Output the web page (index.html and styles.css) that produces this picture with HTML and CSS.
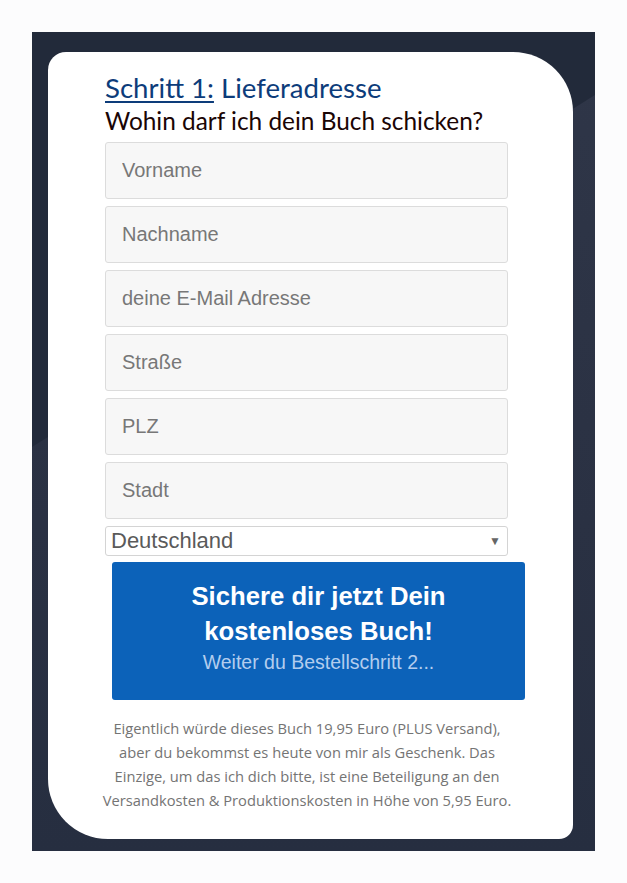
FILE: index.html
```html
<!DOCTYPE html>
<html lang="de">
<head>
  <meta charset="UTF-8">
  <meta name="viewport" content="width=device-width, initial-scale=1.0">
  <title>Lieferadresse</title>
  <link rel="stylesheet" href="styles.css">
</head>
<body>

  <!-- Hintergrund -->
  <div class="fondo">

    <!-- Karte mit dem Formular -->
    <div class="tarjeta">
      <h2 class="titulo"><span class="paso">Schritt 1:</span> Lieferadresse</h2>
      <p class="pregunta">Wohin darf ich dein Buch schicken?</p>

      <form class="formulario" onsubmit="return false">
        <input class="campo" type="text" placeholder="Vorname">
        <input class="campo" type="text" placeholder="Nachname">
        <input class="campo" type="email" placeholder="deine E-Mail Adresse">
        <input class="campo" type="text" placeholder="Straße">
        <input class="campo" type="text" placeholder="PLZ">
        <input class="campo" type="text" placeholder="Stadt">

        <div class="selector">
          <span>Deutschland</span>
          <span class="flecha">&#9660;</span>
        </div>

        <button class="boton" type="submit">
          <span class="boton-titulo">Sichere dir jetzt Dein<br>kostenloses Buch!</span>
          <span class="boton-sub">Weiter du Bestellschritt 2...</span>
        </button>
      </form>

      <p class="nota">
        Eigentlich würde dieses Buch 19,95 Euro (PLUS Versand),<br>
        aber du bekommst es heute von mir als Geschenk. Das<br>
        Einzige, um das ich dich bitte, ist eine Beteiligung an den<br>
        Versandkosten &amp; Produktionskosten in Höhe von 5,95 Euro.
      </p>
    </div>

  </div>

</body>
</html>
```

FILE: styles.css
```css
/* Estilos generales */
body, html {
  margin: 0;
  padding: 0;
  background-color: #fcfcfd;
  font-family: "Liberation Sans", Arial, sans-serif;
}

/* Fondo oscuro con la franja diagonal */
.fondo {
  position: relative;
  margin: 32px 0 0 32px;
  width: 563px;
  height: 819px;
  padding: 20px 0 0 16px;
  box-sizing: border-box;
  background: linear-gradient(180deg, #222a3a 0%, #222a3b 60%, #252d3f 100%);
}

.fondo::before {
  content: "";
  position: absolute;
  inset: 0;
  background: linear-gradient(180deg, #2f3648 0%, #2a3143 60%, #262e40 100%);
  clip-path: polygon(0 415px, 100% 63px, 100% 100%, 0 100%);
}

/* Tarjeta blanca */
.tarjeta {
  position: relative; /* encima de la franja */
  width: 525px;
  height: 787px;
  box-sizing: border-box;
  padding: 20px 0 0 57px;
  background-color: #fff;
  border-radius: 18px 60px 14px 60px;
}

.titulo {
  margin: 0;
  font-family: Lato, sans-serif;
  font-weight: 400;
  font-size: 27.6px;
  line-height: 32px;
  color: #0d3c7a;
}

.paso {
  text-decoration: underline;
  text-underline-offset: 3px;
  text-decoration-thickness: 2px;
}

.pregunta {
  margin: 2px 0 6px;
  font-family: Lato, sans-serif;
  font-size: 24.4px;
  line-height: 30px;
  color: #1a0505;
}

/* Formulario */
.formulario {
  display: flex;
  flex-direction: column;
  align-items: flex-start;
}

.campo {
  width: 403px;
  height: 57px;
  box-sizing: border-box;
  margin: 0 0 7px;
  padding: 0 16px;
  border: 1px solid #dcdcdc;
  border-radius: 3px;
  background-color: #f7f7f7;
  font-family: "Liberation Sans", Arial, sans-serif;
  font-size: 20px;
  color: #555;
}

.campo::placeholder {
  color: #777;
}

.selector {
  display: flex;
  justify-content: space-between;
  align-items: center;
  width: 403px;
  height: 30px;
  box-sizing: border-box;
  margin: 0 0 6px;
  padding: 0 6px 0 5px;
  border: 1px solid #d4d4d4;
  border-radius: 3px;
  background-color: #fff;
  font-size: 22px;
  color: #5a5a5a;
}

.flecha {
  font-size: 12px;
  color: #666;
}

.boton {
  display: flex;
  flex-direction: column;
  align-items: center;
  width: 413px;
  height: 138px;
  margin-left: 7px;
  padding: 17px 0 0;
  border: none;
  border-radius: 3px;
  background-color: #0c62b9;
  font-family: "Liberation Sans", Arial, sans-serif;
  cursor: pointer;
}

.boton-titulo {
  font-size: 25.7px;
  font-weight: bold;
  line-height: 35px;
  color: #fff;
}

.boton-sub {
  margin-top: 2px;
  font-size: 19.5px;
  color: #b3cdee;
}

/* Texto final */
.nota {
  width: 460px;
  margin: 16px 0 0 -28px;
  font-family: "Open Sans", sans-serif;
  font-size: 14.7px;
  line-height: 24px;
  text-align: center;
  color: #747474;
}
```
